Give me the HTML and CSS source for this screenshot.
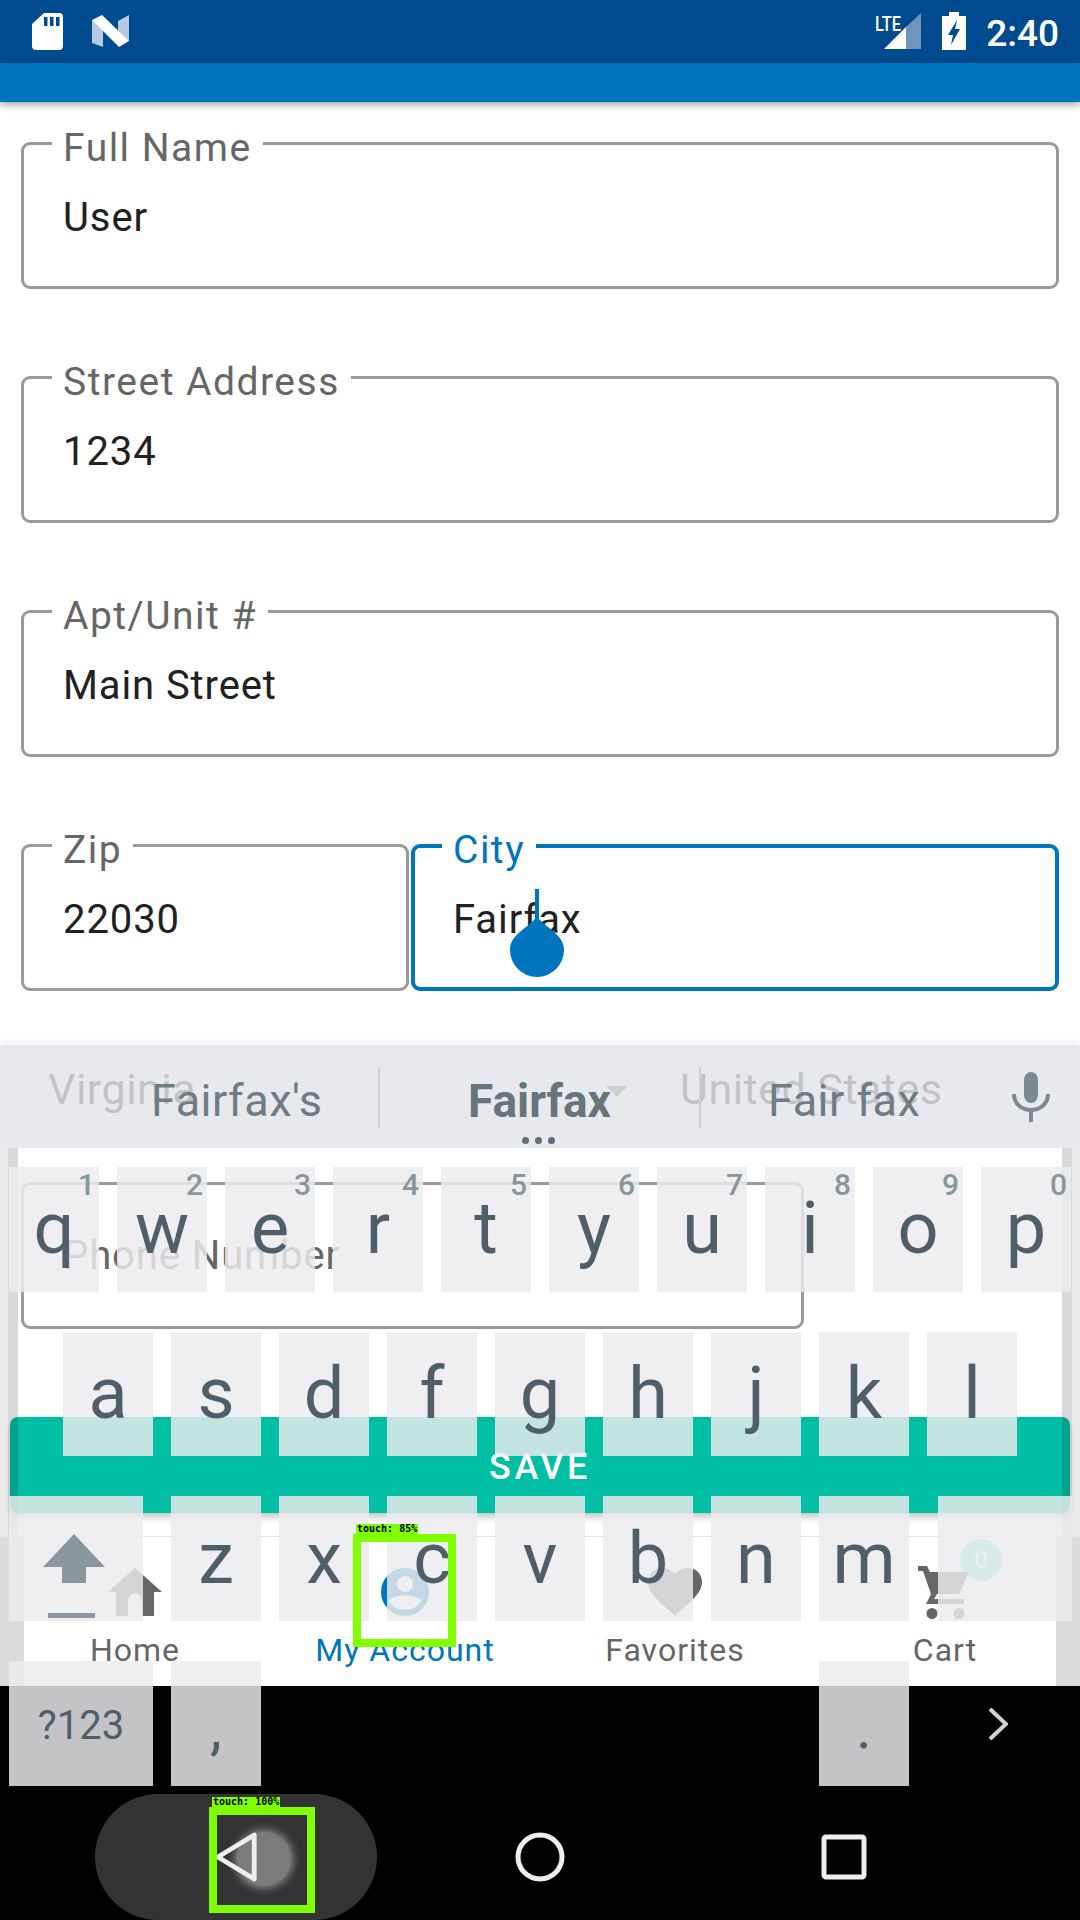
FILE: index.html
```html
<!DOCTYPE html>
<html lang="en">
<head>
<meta charset="utf-8">
<title>Address form</title>
<link rel="stylesheet" href="styles.css">
</head>
<body>
<div class="screen">
  <header class="status">
    <svg class="st-sd" viewBox="0 0 31 37"><path fill="#fff" d="M12 0H27a4 4 0 0 1 4 4V33a4 4 0 0 1-4 4H4a4 4 0 0 1-4-4V11Z"/><path fill="#004a8f" d="M12 4h3.500v9H12zM18 4h3.500v9H18zM24 4h3.500v9H24z"/></svg>
    <svg class="st-n" viewBox="0 0 37 32"><path fill="#b5c9df" d="M0 5 11 10V32L0 28ZM26 6 37 0V26L26 24Z"/><path fill="#fff" d="M0 5 10 0 37 26 27 32Z"/></svg>
    <div class="st-right">
      <div class="st-lte">
        <svg viewBox="0 0 37 36"><path fill="#fff" d="M0 36 22 14V36Z"/><path fill="#6f94bd" d="M22 14 37 0V36H22Z"/></svg>
        <span>LTE</span>
      </div>
      <svg class="st-batt" viewBox="0 0 24 38"><path fill="#fff" d="M7 0h10v4h7v34H0V4h7Z"/><path fill="#004a8f" d="M15 8 6 23h5l-2 10 9-16h-5Z"/></svg>
      <span class="st-time">2:40</span>
    </div>
  </header>
  <div class="appbar"></div>

  <main class="form">
    <div class="field"><span class="label">Full Name</span><span class="value">User</span></div>
    <div class="field"><span class="label">Street Address</span><span class="value">1234</span></div>
    <div class="field"><span class="label">Apt/Unit #</span><span class="value">Main Street</span></div>
    <div class="row-fields">
      <div class="field zip"><span class="label">Zip</span><span class="value">22030</span></div>
      <div class="field city">
        <span class="label">City</span><span class="value">Fairfax</span>
        <div class="handle"><svg viewBox="0 0 54 88"><path fill="#0075bf" d="M25 0h4V30C38 40 54 46 54 61A27 27 0 0 1 0 61C0 46 16 40 25 30Z"/></svg></div>
      </div>
    </div>
    <div class="hidden-row"><span class="under">Virginia</span><i class="caret"></i><span class="under us">United States</span></div>
    <div class="field phone"><span class="value ph">Phone Number</span></div>
  </main>

  <div class="save-wrap"><button class="save">SAVE</button></div>

  <nav class="tabs">
    <div class="tab">
      <svg class="tab-ic" viewBox="0 0 54 48"><path fill="#666" d="M27 0 54 24H46V48H34V34A7 9 0 0 0 20 34V48H8V24H0Z"/></svg>
      <span>Home</span>
    </div>
    <div class="tab active">
      <svg class="tab-ic" viewBox="0 0 54 54"><path fill="#0075bf" fill-rule="evenodd" d="M27 0a27 27 0 1 0 0 54a27 27 0 1 0 0-54ZM27 9a9 9 0 1 1 0 18a9 9 0 1 1 0-18ZM27 47c-8 0-15-4-18-10 2-4 11-6 18-6s16 2 18 6c-3 6-10 10-18 10Z"/></svg>
      <span>My Account</span>
    </div>
    <div class="tab">
      <svg class="tab-ic" viewBox="0 0 54 48"><path fill="#666" d="M27 48 23 44C9 32 0 24 0 14 0 6 6 0 14 0c5 0 10 2 13 6 3-4 8-6 13-6 8 0 14 6 14 14 0 10-9 18-23 30Z"/></svg>
      <span>Favorites</span>
    </div>
    <div class="tab">
      <div class="cart">
        <svg class="tab-ic" viewBox="0 0 54 54"><path fill="#666" d="M0 0H9L12 6H51L41 28H19L16 33H46V38H8L13 28 5 5H0ZM14 42a5.500 5.500 0 1 1 0 11a5.500 5.500 0 1 1 0-11ZM41 42a5.500 5.500 0 1 1 0 11a5.500 5.500 0 1 1 0-11Z"/></svg>
        <b class="badge">0</b>
      </div>
      <span>Cart</span>
    </div>
  </nav>

  <footer class="navbar">
    <div class="pill">
      <i class="ripple"></i>
      <svg class="nav-back" viewBox="0 0 46 52"><path fill="none" stroke="#eee" stroke-width="5" stroke-linejoin="round" d="M41 3V49L3 26Z"/></svg>
    </div>
    <svg class="nav-home" viewBox="0 0 50 50"><circle cx="25" cy="25" r="22" fill="none" stroke="#eee" stroke-width="5"/></svg>
    <svg class="nav-recent" viewBox="0 0 46 46"><rect x="3" y="3" width="40" height="40" rx="2" fill="none" stroke="#eee" stroke-width="5"/></svg>
  </footer>

  <div class="shade left"></div>
  <div class="shade right"></div>

  <section class="keyboard">
    <div class="strip">
      <span class="sug s1">Fairfax's</span>
      <i class="divider d1"></i>
      <span class="sug s2">Fairfax</span>
      <i class="divider d2"></i>
      <span class="sug s3">Fair fax</span>
      <svg class="mic" viewBox="0 0 38 50"><path fill="#7b8990" d="M12 8a7 8 0 0 1 14 0V23a7 8 0 0 1-14 0Z"/><path fill="none" stroke="#7b8990" stroke-width="4" d="M2 22c0 10 8 16 17 16s17-6 17-16M19 38V50"/></svg>
      <div class="dots"><i></i><i></i><i></i></div>
    </div>
    <div class="keys">
      <div class="krow r1">
        <div class="key"><sup>1</sup>q</div><div class="key"><sup>2</sup>w</div><div class="key"><sup>3</sup>e</div><div class="key"><sup>4</sup>r</div><div class="key"><sup>5</sup>t</div><div class="key"><sup>6</sup>y</div><div class="key"><sup>7</sup>u</div><div class="key"><sup>8</sup>i</div><div class="key"><sup>9</sup>o</div><div class="key"><sup>0</sup>p</div>
      </div>
      <div class="krow r2">
        <div class="key">a</div><div class="key">s</div><div class="key">d</div><div class="key">f</div><div class="key">g</div><div class="key">h</div><div class="key">j</div><div class="key">k</div><div class="key">l</div>
      </div>
      <div class="krow r3">
        <div class="key wide shift"><svg viewBox="0 0 62 84"><path fill="#8a979b" d="M31 0 62 33H43V49H19V33H0Z"/><path fill="#8d98a5" d="M5 79H52V84H5Z"/></svg></div>
        <div class="key">z</div><div class="key">x</div><div class="key">c</div><div class="key">v</div><div class="key">b</div><div class="key">n</div><div class="key">m</div>
        <div class="key wide"></div>
      </div>
      <div class="krow r4">
        <div class="key sym">?123</div>
        <div class="key punct">,</div>
        <div class="space"></div>
        <div class="key punct">.</div>
        <svg class="chev" viewBox="0 0 20 32"><path fill="none" stroke="#d4d4d4" stroke-width="4" d="M2 1 18 16 2 31"/></svg>
      </div>
    </div>
  </section>

  <div class="touch t1"><span>touch: 85%</span></div>
  <div class="touch t2"><span>touch: 100%</span></div>
</div>
</body>
</html>
```

FILE: styles.css
```css
* { box-sizing: border-box; }
html, body { margin: 0; padding: 0; }
body { width: 1080px; height: 1920px; overflow: hidden; background: #fff; font-family: Roboto, "Liberation Sans", sans-serif; }
.screen { position: relative; width: 1080px; height: 1920px; display: flex; flex-direction: column; overflow: hidden; background: #fff; }

/* status + app bar */
.status { height: 63px; flex: none; background: #004a8f; display: flex; align-items: flex-start; padding: 13px 21px 0 32px; }
.st-sd { width: 31px; height: 37px; }
.st-n { width: 37px; height: 32px; margin: 2px 0 0 29px; }
.st-right { margin-left: auto; display: flex; align-items: flex-start; }
.st-lte { position: relative; width: 46px; height: 37px; }
.st-lte svg { position: absolute; left: 9px; top: 0; width: 37px; height: 36px; }
.st-lte span { position: absolute; left: 0; top: 1px; font-size: 21px; font-weight: 500; color: #fff; line-height: 21px; transform: scaleX(.78); transform-origin: left; }
.st-batt { width: 24px; height: 38px; margin: -1px 0 0 21px; }
.st-time { margin: -1px 0 0 20px; color: #fff; font-size: 37px; line-height: 44px; font-weight: 500; }
.appbar { height: 39px; flex: none; background: #0075bf; box-shadow: 0 3px 8px rgba(0,0,0,.35); position: relative; z-index: 1; }

/* form */
.form { flex: none; padding: 40px 21px 0; display: flex; flex-direction: column; gap: 87px; background: #fff; }
.field { position: relative; height: 147px; flex: none; border: 3px solid #9a9a9a; border-radius: 9px; background: #fff; padding-left: 39px; display: flex; align-items: center; }
.label { position: absolute; left: 28px; top: -26px; padding: 0 11px; background: #fff; color: #666; font-size: 39px; line-height: 58px; letter-spacing: 1.500px; height: 54px; }
.value { color: #212121; font-size: 40px; line-height: 50px; letter-spacing: .9px; padding-top: 5px; }
.row-fields { display: flex; gap: 2px; }
.zip { width: 388px; }
.city { flex: 1; border: 4px solid #0075bf; padding-left: 38px; }
.city .label { color: #0075bf; left: 27px; top: -27px; }
.handle { position: absolute; left: 95px; top: 41px; width: 54px; height: 88px; }
.handle svg { display: block; width: 54px; height: 88px; }
.hidden-row { height: 106px; margin-top: -42px; display: flex; align-items: center; position: relative; padding-left: 27px; flex: none; }
.under { color: #212121; font-size: 43px; letter-spacing: .5px; }
.us { position: absolute; left: 659px; }
.caret { position: absolute; left: 585px; top: 50px; width: 0; height: 0; border: 11px solid transparent; border-top-color: #666; border-bottom: 0; }
.phone { width: 783px; margin-top: -47px; }
.ph { color: #666; padding-top: 0; }

/* save */
.save-wrap { position: absolute; left: 10px; right: 10px; top: 1417px; }
.save { width: 100%; height: 96px; border: 0; border-radius: 8px; background: #00bfa5; color: #fff; font: 500 36px Roboto, sans-serif; letter-spacing: 3.500px; box-shadow: 0 5px 6px rgba(0,0,0,.2); display: flex; align-items: flex-end; justify-content: center; padding: 0 0 25px; }

/* bottom tabs */
.tabs { position: absolute; left: 0; width: 1080px; top: 1536px; height: 150px; background: linear-gradient(90deg, #dcdcdc 24px, #fff 24px, #fff 1056px, #dcdcdc 1056px); display: grid; grid-template-columns: repeat(4, 270px); border-top: 1px solid #e4e4e4; }
.tab { display: flex; flex-direction: column; align-items: center; padding-top: 31px; color: #666; font-size: 32px; letter-spacing: 1px; }
.tab span { margin-top: 16px; line-height: 36px; }
.tab-ic { width: 54px; height: 48px; display: block; }
.active { color: #0075bf; }
.cart { position: relative; }
.cart .tab-ic { height: 54px; margin-top: -2px; margin-bottom: -4px; }
.badge { position: absolute; left: 42px; top: -29px; width: 42px; height: 42px; border-radius: 50%; background: #00bfa5; color: #fff; font-size: 24px; font-weight: 400; letter-spacing: 0; line-height: 42px; text-align: center; opacity: .55; }

/* android nav */
.navbar { position: absolute; left: 0; top: 1686px; width: 1080px; height: 234px; background: #000; }
.pill { position: absolute; left: 95px; top: 108px; width: 282px; height: 126px; border-radius: 63px; background: #333; }
.ripple { position: absolute; left: 142px; top: 38px; width: 54px; height: 54px; border-radius: 50%; background: #7b7b7b; box-shadow: 0 0 9px 2px rgba(220,220,230,.55); }
.nav-back { position: absolute; left: 120px; top: 38px; width: 44px; height: 50px; }
.nav-home { position: absolute; left: 515px; top: 146px; width: 50px; height: 50px; }
.nav-recent { position: absolute; left: 821px; top: 148px; width: 46px; height: 46px; }

/* page edge shade */
.shade { position: absolute; top: 1148px; height: 388px; width: 18px; }
.shade.left { left: 0; background: linear-gradient(90deg, rgba(0,0,0,.08) 8px, rgba(0,0,0,.15) 8px); }
.shade.right { right: 0; background: linear-gradient(270deg, rgba(0,0,0,.08) 8px, rgba(0,0,0,.15) 8px); }

/* keyboard overlay */
.keyboard { position: absolute; left: 0; top: 1045px; width: 1080px; height: 745px; }
.strip { position: relative; height: 103px; background: rgba(227,229,232,.83); box-shadow: 0 -4px 6px rgba(0,0,0,.04); }
.sug { position: absolute; top: 31px; font-size: 45px; line-height: 50px; color: #6e7c84; letter-spacing: .5px; }
.s1 { left: 151px; }
.s2 { left: 468px; font-size: 46px; font-weight: 700; color: #66747c; letter-spacing: 0; }
.s3 { left: 768px; }
.divider { position: absolute; top: 22px; width: 2px; height: 61px; background: #ccd0d3; }
.d1 { left: 378px; }
.d2 { left: 699px; }
.mic { position: absolute; left: 1012px; top: 27px; width: 38px; height: 50px; }
.dots { position: absolute; left: 522px; top: 92px; display: flex; gap: 6px; }
.dots i { width: 7px; height: 7px; border-radius: 50%; background: #5f6d75; }
.keys { margin-top: 19px; display: grid; grid-auto-rows: 124.67px; row-gap: 40px; }
.krow { display: flex; gap: 18px; padding-left: 9px; }
.r2 { padding-left: 63px; }
.key { position: relative; width: 90px; flex: none; background: rgba(236,236,238,.83); color: #4f5f6a; font-size: 72px; line-height: 84px; display: flex; align-items: center; justify-content: center; }
.key sup { position: absolute; right: 4px; top: 0; font-size: 30px; line-height: 36px; font-weight: 500; color: #8a969e; vertical-align: baseline; }
.wide { width: 134px; }
.shift { align-items: flex-start; }
.shift svg { width: 62px; height: 84px; margin: 38px 0 0 -4px; }
.r3 .wide:first-child { margin-right: 10px; }
.r3 .wide:last-child { margin-left: 11px; }
.sym { width: 144px; font-size: 40px; padding-top: 6px; }
.punct { font-size: 60px; padding-top: 10px; }
.space { width: 522px; flex: none; }
.chev { width: 20px; height: 32px; margin: 47px 0 0 61px; flex: none; }

/* touch markers */
.touch { position: absolute; border: 8px solid #7fff00; }
.touch span { position: absolute; left: -5px; top: -18px; height: 10px; padding: 0 1px; background: #7fff00; color: #000; font: 700 10px/10px "DejaVu Sans Mono", monospace; white-space: nowrap; }
.t1 { left: 353px; top: 1534px; width: 103px; height: 113px; }
.t2 { left: 209px; top: 1807px; width: 106px; height: 106px; }
```
